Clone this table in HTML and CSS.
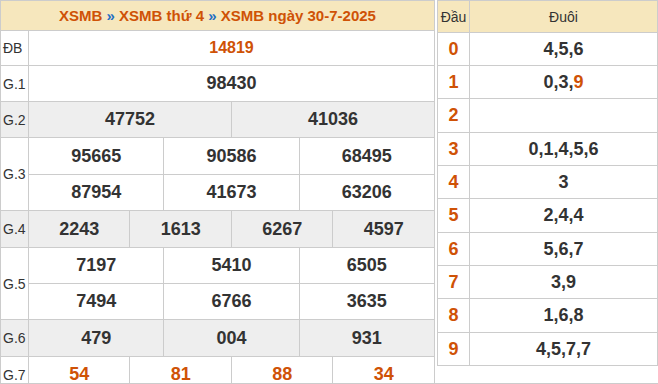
FILE: index.html
```html
<!DOCTYPE html>
<html lang="vi">
<head>
  <meta charset="UTF-8">
  <title>XSMB ngày 30-7-2025</title>
  <link rel="stylesheet" href="styles.css">
</head>
<body>

  <div class="kq-wrap">

    <!-- Bảng kết quả -->
    <table class="kq-table">
      <colgroup>
        <col class="col-label">
        <col><col><col><col><col><col><col><col><col><col><col><col>
      </colgroup>
      <thead>
        <tr class="row-head">
          <th colspan="13">
            <span>XSMB</span> <em>»</em> <span>XSMB thứ 4</span> <em>»</em> <span>XSMB ngày 30-7-2025</span>
          </th>
        </tr>
      </thead>
      <tbody>
        <tr class="row-db">
          <td class="label">ĐB</td>
          <td colspan="12" class="num special">14819</td>
        </tr>
        <tr class="row-g1">
          <td class="label">G.1</td>
          <td colspan="12" class="num">98430</td>
        </tr>
        <tr class="row-g2 shade">
          <td class="label">G.2</td>
          <td colspan="6" class="num">47752</td>
          <td colspan="6" class="num">41036</td>
        </tr>
        <tr class="row-g3a">
          <td class="label" rowspan="2">G.3</td>
          <td colspan="4" class="num">95665</td>
          <td colspan="4" class="num">90586</td>
          <td colspan="4" class="num">68495</td>
        </tr>
        <tr class="row-g3b">
          <td colspan="4" class="num">87954</td>
          <td colspan="4" class="num">41673</td>
          <td colspan="4" class="num">63206</td>
        </tr>
        <tr class="row-g4 shade">
          <td class="label">G.4</td>
          <td colspan="3" class="num">2243</td>
          <td colspan="3" class="num">1613</td>
          <td colspan="3" class="num">6267</td>
          <td colspan="3" class="num">4597</td>
        </tr>
        <tr class="row-g5a">
          <td class="label" rowspan="2">G.5</td>
          <td colspan="4" class="num">7197</td>
          <td colspan="4" class="num">5410</td>
          <td colspan="4" class="num">6505</td>
        </tr>
        <tr class="row-g5b">
          <td colspan="4" class="num">7494</td>
          <td colspan="4" class="num">6766</td>
          <td colspan="4" class="num">3635</td>
        </tr>
        <tr class="row-g6 shade">
          <td class="label">G.6</td>
          <td colspan="4" class="num">479</td>
          <td colspan="4" class="num">004</td>
          <td colspan="4" class="num">931</td>
        </tr>
        <tr class="row-g7">
          <td class="label">G.7</td>
          <td colspan="3" class="num special">54</td>
          <td colspan="3" class="num special">81</td>
          <td colspan="3" class="num special">88</td>
          <td colspan="3" class="num special">34</td>
        </tr>
      </tbody>
    </table>

    <!-- Bảng lô tô đầu đuôi -->
    <table class="loto-table">
      <colgroup>
        <col class="col-dau">
        <col>
      </colgroup>
      <thead>
        <tr>
          <th>Đầu</th>
          <th>Đuôi</th>
        </tr>
      </thead>
      <tbody>
        <tr><td class="dau">0</td><td class="duoi">4,5,6</td></tr>
        <tr><td class="dau">1</td><td class="duoi">0,3,<span class="special">9</span></td></tr>
        <tr class="tall"><td class="dau">2</td><td class="duoi"></td></tr>
        <tr><td class="dau">3</td><td class="duoi">0,1,4,5,6</td></tr>
        <tr><td class="dau">4</td><td class="duoi">3</td></tr>
        <tr class="tall"><td class="dau">5</td><td class="duoi">2,4,4</td></tr>
        <tr><td class="dau">6</td><td class="duoi">5,6,7</td></tr>
        <tr><td class="dau">7</td><td class="duoi">3,9</td></tr>
        <tr class="tall"><td class="dau">8</td><td class="duoi">1,6,8</td></tr>
        <tr><td class="dau">9</td><td class="duoi">4,5,7,7</td></tr>
      </tbody>
    </table>

  </div>

</body>
</html>
```

FILE: styles.css
```css
/* Reset */
* {
  margin: 0;
  padding: 0;
  box-sizing: border-box;
}

body {
  font-family: "Liberation Sans", Arial, sans-serif;
  color: #333;
  background: #fff;
}

/* Wrapper */
.kq-wrap {
  display: flex;
  align-items: flex-start;
  gap: 2px;
  width: 658px;
  height: 384px;
  border-bottom: 1px solid #ccc;
  overflow: hidden;
}

table {
  border-collapse: collapse;
  table-layout: fixed;
  border: 1px solid #ccc;
}

th, td {
  border: 1px solid #ccc;
  padding: 0;
  vertical-align: middle;
}

/* Results table */
.kq-table {
  width: 435px;
  flex: none;
}

.col-label {
  width: 28px;
}

.row-head {
  height: 30px;
  background: #f6e7bd;
}

.row-head th {
  font-size: 15px;
  font-weight: bold;
  color: #cf5206;
  text-align: center;
}

.row-head em {
  font-style: normal;
  color: #1f6ec4;
}

.kq-table tr.row-db { height: 35px; }
.kq-table tr.row-g1,
.kq-table tr.row-g2,
.kq-table tr.row-g3b,
.kq-table tr.row-g5a,
.kq-table tr.row-g5b,
.kq-table tr.row-g7 { height: 36px; }
.kq-table tr.row-g3a,
.kq-table tr.row-g4,
.kq-table tr.row-g6 { height: 37px; }

.shade {
  background: #eee;
}

.label {
  font-size: 14px;
  padding-left: 2px;
  color: #333;
}

.num {
  font-size: 18px;
  font-weight: bold;
  text-align: center;
  color: #333;
}

.row-db .num {
  font-size: 16px;
}

.special {
  color: #cf5206;
}

/* Loto table */
.loto-table {
  width: 221px;
  flex: none;
}

.col-dau {
  width: 32px;
}

.loto-table thead tr {
  height: 32px;
  background: #f6e7bd;
}

.loto-table th {
  font-size: 14px;
  font-weight: normal;
  color: #333;
  text-align: center;
}

.loto-table tbody tr {
  height: 33px;
}

.loto-table tbody tr.tall {
  height: 34px;
}

.dau {
  font-size: 18px;
  font-weight: bold;
  color: #cf5206;
  text-align: center;
}

.duoi {
  font-size: 18px;
  font-weight: bold;
  text-align: center;
  color: #333;
}
```
